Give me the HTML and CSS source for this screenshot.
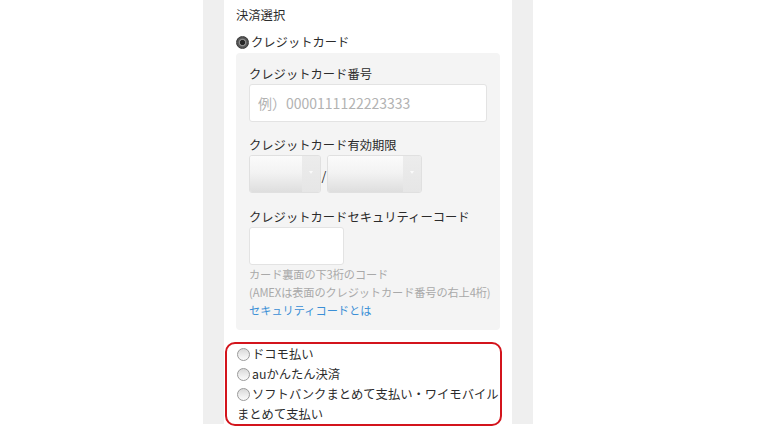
FILE: index.html
```html
<!DOCTYPE html>
<html lang="ja">
<head>
<meta charset="utf-8">
<title>決済選択</title>
<link rel="stylesheet" href="styles.css">
</head>
<body>
<div class="stage">
  <div class="phone">
    <div class="card">
      <div class="title">決済選択</div>
      <div class="opt"><span class="radio on"></span>クレジットカード</div>
      <div class="ccbox">
        <div class="label">クレジットカード番号</div>
        <div class="input wide"><span class="ph">例）0000111122223333</span></div>
        <div class="label gap-exp">クレジットカード有効期限</div>
        <div class="exp">
          <div class="sel month"><span class="face"></span><span class="btn"><span class="tri"></span></span></div>
          <span class="slash">/</span>
          <div class="sel year"><span class="face"></span><span class="btn"><span class="tri"></span></span></div>
        </div>
        <div class="label gap-sec">クレジットカードセキュリティーコード</div>
        <div class="input short"></div>
        <p class="note">カード裏面の下3桁のコード</p>
        <p class="note">(AMEXは表面のクレジットカード番号の右上4桁)</p>
        <a class="link" href="#">セキュリティコードとは</a>
      </div>
      <div class="others">
        <div class="opt"><span class="radio"></span>ドコモ払い</div>
        <div class="opt"><span class="radio"></span>auかんたん決済</div>
        <div class="opt"><span class="radio"></span>ソフトバンクまとめて支払い・ワイモバイルまとめて支払い</div>
      </div>
    </div>
  </div>
</div>
</body>
</html>
```

FILE: styles.css
```css
body {
  margin: 0;
  background: #fff;
  font-family: "Noto Sans CJK JP", "Noto Sans", sans-serif;
  color: #2b2b2b;
}

.stage {
  width: 760px;
  height: 428px;
  overflow: hidden;
}

.phone {
  margin-left: 203px;
  width: 330px;
  height: 424px;
  padding: 0 21px;
  box-sizing: border-box;
  background: #efefef;
}

.card {
  height: 100%;
  box-sizing: border-box;
  background: #fff;
  padding: 5px 12px 0;
  font-size: 12.3px;
  line-height: 20px;
}

.title {
  margin-bottom: 7px;
}

.opt {
  display: block;
}

.radio {
  display: inline-block;
  width: 13px;
  height: 13px;
  box-sizing: border-box;
  border-radius: 50%;
  border: 1px solid #9a9a9a;
  background: linear-gradient(180deg, #d9d9d9 0%, #f2f2f2 70%, #fbfbfb 100%);
  vertical-align: -1.5px;
  margin-right: 2px;
}

.radio.on {
  border-color: #3a3a3a;
  background: radial-gradient(circle at center, #262626 0 2.2px, #8d8d8d 2.9px 3.3px, #5a5a5a 4.2px, #3e3e3e 100%);
}

.ccbox {
  margin-top: 1px;
  background: #f4f4f4;
  border-radius: 4px;
  padding: 12px 13px 11px;
}

.label {
  line-height: 19px;
}

.gap-exp {
  margin-top: 14px;
}

.gap-sec {
  margin-top: 15px;
}

.input {
  height: 38px;
  box-sizing: border-box;
  background: #fff;
  border: 1px solid #e3e3e3;
  border-radius: 3px;
  padding: 0 8px;
  display: flex;
  align-items: center;
}

.input.short {
  width: 95px;
}

.ph {
  color: #b2b2b2;
  font-size: 14px;
}

.exp {
  display: flex;
  height: 38px;
}

.sel {
  display: flex;
  box-sizing: border-box;
  height: 38px;
  border: 1px solid #e0e0e0;
  border-radius: 3px;
  overflow: hidden;
}

.sel.month {
  width: 72px;
}

.sel.year {
  width: 95px;
}

.face {
  flex: 1;
  background: linear-gradient(180deg, #fbfbfb 0%, #f3f3f3 45%, #dedede 100%);
}

.btn {
  width: 18px;
  display: flex;
  align-items: center;
  justify-content: center;
  background: linear-gradient(180deg, #ececec 0%, #e6e6e6 100%);
}

.tri {
  width: 0;
  height: 0;
  border-left: 2.5px solid transparent;
  border-right: 2.5px solid transparent;
  border-top: 3px solid #fafafa;
  margin-top: -4px;
}

.slash {
  width: 6px;
  text-align: center;
  line-height: 38px;
  font-size: 12.3px;
  padding-top: 2px;
}

.note {
  margin: 0;
  font-size: 11.2px;
  line-height: 18px;
  color: #a9a9a9;
  white-space: nowrap;
  letter-spacing: -0.1px;
}

.link {
  display: block;
  font-size: 11.2px;
  line-height: 18px;
  color: #3b8fd6;
  text-decoration: none;
}

.others {
  margin: 12px -2px 0 -11px;
  border: 2px solid #d3141c;
  border-radius: 10px;
  padding: 0 0 0 10px;
}
```
